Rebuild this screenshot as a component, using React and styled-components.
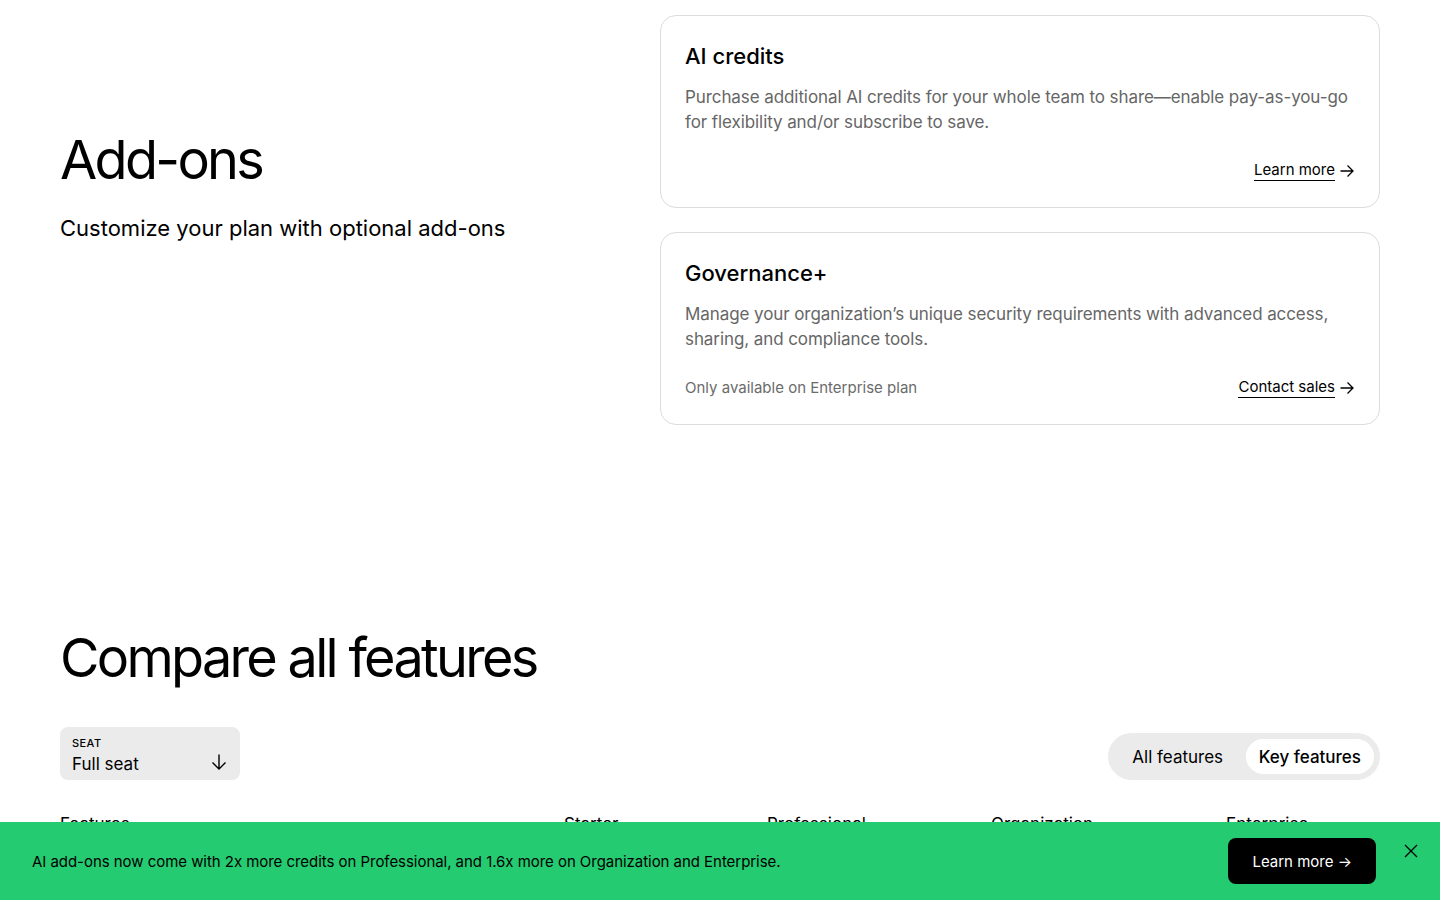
import React, { useState } from "react";
import styled, { createGlobalStyle } from "styled-components";

const GlobalStyle = createGlobalStyle`
  * { box-sizing: border-box; }
  body {
    margin: 0;
    background: #ffffff;
    color: #000000;
    font-family: Inter, "Noto Sans", sans-serif;
    -webkit-font-smoothing: antialiased;
  }
`;

const addOns = [
  {
    title: "AI credits",
    body: "Purchase additional AI credits for your whole team to share\u2014enable pay-as-you-go for flexibility and/or subscribe to save.",
    link: "Learn more",
  },
  {
    title: "Governance+",
    body: "Manage your organization\u2019s unique security requirements with advanced access, sharing, and compliance tools.",
    note: "Only available on Enterprise plan",
    link: "Contact sales",
  },
];

const planColumns = ["Features", "Starter", "Professional", "Organization", "Enterprise"];

const ArrowRight = () => (
  <svg width="16" height="16" viewBox="0 0 16 16" fill="none" stroke="currentColor" strokeWidth="1.3">
    <path d="M1.5 8h12.5M8.5 2.5L14 8l-5.5 5.5" />
  </svg>
);

const ArrowDown = () => (
  <svg width="18" height="18" viewBox="0 0 18 18" fill="none" stroke="currentColor" strokeWidth="1.4">
    <path d="M9 1.5v14.5M2.5 9.5L9 16l6.5-6.5" />
  </svg>
);

const CloseIcon = () => (
  <svg width="14" height="14" viewBox="0 0 14 14" fill="none" stroke="currentColor" strokeWidth="1.3">
    <path d="M1 1l12 12M13 1L1 13" />
  </svg>
);

export default function App() {
  const [view, setView] = useState("key");
  const [bannerOpen, setBannerOpen] = useState(true);

  return (
    <>
      <GlobalStyle />
      <Page>
        <AddOnsSection>
          <Intro>
            <SectionTitle>Add-ons</SectionTitle>
            <Lead>Customize your plan with optional add-ons</Lead>
          </Intro>
          <CardList>
            {addOns.map((item) => (
              <Card key={item.title}>
                <CardTitle>{item.title}</CardTitle>
                <CardBody>{item.body}</CardBody>
                <CardFooter>
                  <Note>{item.note}</Note>
                  <TextLink href="#">
                    <span>{item.link}</span>
                    <ArrowRight />
                  </TextLink>
                </CardFooter>
              </Card>
            ))}
          </CardList>
        </AddOnsSection>

        <CompareSection>
          <SectionTitle>Compare all features</SectionTitle>
          <Controls>
            <SeatSelect>
              <SeatText>
                <SeatLabel>Seat</SeatLabel>
                <SeatValue>Full seat</SeatValue>
              </SeatText>
              <ArrowDown />
            </SeatSelect>
            <Toggle>
              <ToggleButton active={view === "all"} onClick={() => setView("all")}>
                All features
              </ToggleButton>
              <ToggleButton active={view === "key"} onClick={() => setView("key")}>
                Key features
              </ToggleButton>
            </Toggle>
          </Controls>
          <TableHead>
            {planColumns.map((c) => (
              <HeadCell key={c}>{c}</HeadCell>
            ))}
          </TableHead>
          <Spacer />
        </CompareSection>
      </Page>

      {bannerOpen && (
        <Banner>
          <BannerText>
            AI add-ons now come with 2x more credits on Professional, and 1.6x more on Organization and Enterprise.
          </BannerText>
          <BannerButton>Learn more &rarr;</BannerButton>
          <CloseButton aria-label="Close" onClick={() => setBannerOpen(false)}>
            <CloseIcon />
          </CloseButton>
        </Banner>
      )}
    </>
  );
}

const Page = styled.main`
  width: 1440px;
  padding: 0 60px;
`;

const AddOnsSection = styled.section`
  display: grid;
  grid-template-columns: 1fr 720px;
  padding-top: 15px;
`;

const Intro = styled.div`
  padding-top: 115px;
`;

const SectionTitle = styled.h2`
  margin: 0;
  font-size: 54px;
  font-weight: 400;
  line-height: 60px;
  letter-spacing: -0.05em;
`;

const Lead = styled.p`
  margin: 23px 0 0;
  font-size: 22px;
  line-height: 1.4;
`;

const CardList = styled.div`
  display: flex;
  flex-direction: column;
  gap: 24px;
`;

const Card = styled.article`
  border: 1px solid #dcdcdc;
  border-radius: 16px;
  padding: 24px 24px 24px;
  min-height: 193px;
`;

const CardTitle = styled.h3`
  margin: 0;
  font-size: 22px;
  font-weight: 500;
  line-height: 32px;
`;

const CardBody = styled.p`
  margin: 13px 0 0;
  font-size: 17px;
  line-height: 25px;
  color: #666666;
  letter-spacing: -0.005em;
`;

const CardFooter = styled.div`
  display: flex;
  justify-content: space-between;
  align-items: center;
  margin-top: 25px;
`;

const Note = styled.span`
  font-size: 15px;
  color: #6b6b6b;
`;

const TextLink = styled.a`
  display: inline-flex;
  align-items: center;
  gap: 4px;
  color: #000000;
  font-size: 15px;
  text-decoration: none;

  span {
    border-bottom: 1px solid #000000;
    padding-bottom: 1px;
  }
`;

const CompareSection = styled.section`
  padding-top: 203px;
`;

const Controls = styled.div`
  display: flex;
  justify-content: space-between;
  align-items: flex-end;
  margin-top: 39px;
`;

const SeatSelect = styled.button`
  width: 180px;
  height: 53px;
  display: flex;
  align-items: flex-start;
  justify-content: space-between;
  padding: 9px 12px 0;
  border: none;
  border-radius: 8px;
  background: #ebebeb;
  color: #000000;
  font-family: inherit;
  text-align: left;
  cursor: pointer;

  svg {
    margin-top: 17px;
  }
`;

const SeatText = styled.div`
  display: flex;
  flex-direction: column;
  gap: 2px;
`;

const SeatLabel = styled.span`
  font-size: 11px;
  font-weight: 500;
  text-transform: uppercase;
  letter-spacing: 0.04em;
  line-height: 14px;
`;

const SeatValue = styled.span`
  font-size: 17px;
  line-height: 24px;
`;

const Toggle = styled.div`
  display: grid;
  grid-auto-flow: column;
  grid-auto-columns: 1fr;
  gap: 4px;
  padding: 6px;
  border-radius: 24px;
  background: #ebebeb;
`;

const ToggleButton = styled.button`
  height: 35px;
  padding: 0 13px;
  border: none;
  border-radius: 18px;
  background: ${(p) => (p.active ? "#ffffff" : "transparent")};
  color: #000000;
  font-family: inherit;
  font-size: 17px;
  font-weight: ${(p) => (p.active ? 500 : 400)};
  white-space: nowrap;
  cursor: pointer;
`;

const TableHead = styled.div`
  display: grid;
  grid-template-columns: 504px 203px 224px 235px 1fr;
  margin-top: 32px;
`;

const HeadCell = styled.div`
  font-size: 17px;
  font-weight: 400;
  line-height: 24px;
`;

const Spacer = styled.div`
  height: 200px;
`;

const Banner = styled.div`
  position: fixed;
  left: 0;
  right: 0;
  bottom: 0;
  height: 78px;
  display: flex;
  align-items: center;
  justify-content: space-between;
  padding: 0 64px 0 32px;
  background: #24cb71;
`;

const BannerText = styled.p`
  margin: 0;
  font-size: 15px;
  color: #000000;
  letter-spacing: -0.003em;
`;

const BannerButton = styled.button`
  height: 46px;
  padding: 0 24px;
  border: none;
  border-radius: 8px;
  background: #000000;
  color: #ffffff;
  font-family: inherit;
  font-size: 15px;
  cursor: pointer;
`;

const CloseButton = styled.button`
  position: absolute;
  top: 20px;
  right: 20px;
  width: 18px;
  height: 18px;
  display: flex;
  align-items: center;
  justify-content: center;
  padding: 0;
  border: none;
  background: transparent;
  color: #000000;
  cursor: pointer;
`;
